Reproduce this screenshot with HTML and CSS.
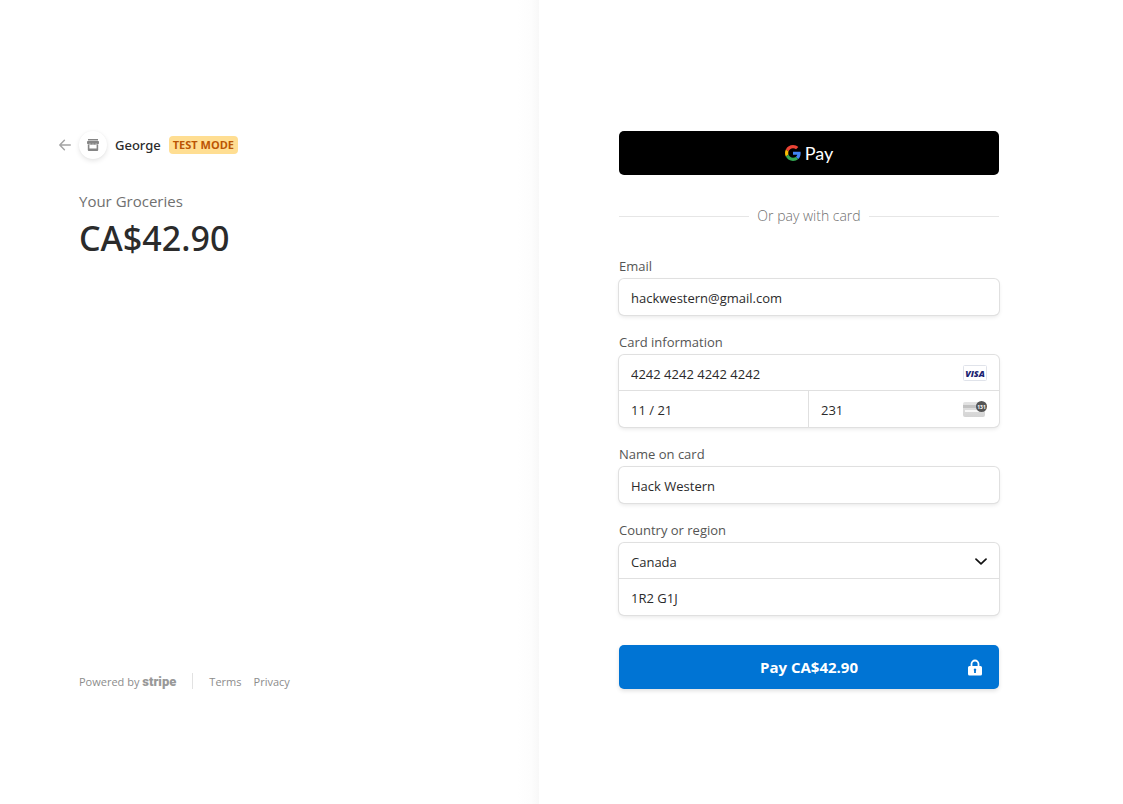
FILE: index.html
```html
<!DOCTYPE html>
<html lang="en">
<head>
<meta charset="utf-8">
<meta name="viewport" content="width=device-width, initial-scale=1">
<title>Checkout</title>
<link rel="stylesheet" href="styles.css">
</head>
<body>
<div class="page">
  <section class="side side-summary">
    <div class="summary">
      <header class="merchant">
        <a class="back" href="#" aria-label="Back">
          <svg width="12" height="12" viewBox="0 0 12 12" fill="none" stroke="#a3a3a3" stroke-width="1.4" stroke-linecap="round" stroke-linejoin="round"><path d="M11.3 6H.9M5.4 1.2.8 6l4.600 4.800"/></svg>
        </a>
        <span class="avatar">
          <svg width="12" height="12" viewBox="0 0 12 12" fill="#858585"><path d="M1 0h10v1.500H1zM.3 2h11.400L12 3.600a1.500 1.500 0 0 1-3 .5 1.500 1.500 0 0 1-3 0 1.500 1.500 0 0 1-3 0A1.500 1.500 0 0 1 0 3.600z"/><path fill-rule="evenodd" d="M.8 5.500h10.400V11a1 1 0 0 1-1 1H1.800a1 1 0 0 1-1-1zM2.400 6v3.500h7.200V6z"/></svg>
        </span>
        <span class="merchant-name">George</span>
        <span class="tag">TEST MODE</span>
      </header>
      <h1 class="product">Your Groceries</h1>
      <p class="amount">CA$42.90</p>
      <footer class="footer">
        <a class="powered" href="#">Powered by <span class="wordmark">stripe</span></a>
        <nav class="links"><a href="#">Terms</a><a href="#">Privacy</a></nav>
      </footer>
    </div>
  </section>
  <main class="side side-payment">
    <form class="payment">
      <button class="gpay" type="button" aria-label="Google Pay">
        <svg width="16" height="16" viewBox="0 0 48 48"><path fill="#ea4335" d="M24 9.500c3.540 0 6.710 1.220 9.210 3.600l6.850-6.850C35.900 2.380 30.470 0 24 0 14.620 0 6.510 5.380 2.560 13.220l7.980 6.190C12.430 13.720 17.740 9.500 24 9.500z"/><path fill="#4285f4" d="M46.980 24.550c0-1.570-.15-3.090-.38-4.550H24v9.020h12.940c-.58 2.960-2.260 5.480-4.780 7.180l7.730 6c4.510-4.180 7.090-10.360 7.090-17.650z"/><path fill="#fbbc05" d="M10.530 28.590c-.48-1.450-.76-2.990-.76-4.590s.27-3.140.76-4.590l-7.980-6.190C.92 16.460 0 20.120 0 24s.92 7.540 2.560 10.780l7.970-6.190z"/><path fill="#34a853" d="M24 48c6.480 0 11.930-2.130 15.890-5.810l-7.730-6c-2.150 1.450-4.920 2.300-8.160 2.300-6.260 0-11.570-4.220-13.470-9.910l-7.980 6.190C6.510 42.620 14.620 48 24 48z"/></svg>
        <span>Pay</span>
      </button>
      <p class="divider">Or pay with card</p>
      <div class="fields">
        <div class="group">
          <label for="email">Email</label>
          <div class="box"><div class="row"><input id="email" type="email" value="hackwestern@gmail.com"></div></div>
        </div>
        <div class="group">
          <label for="card">Card information</label>
          <div class="box">
            <div class="row row-top">
              <input id="card" type="text" inputmode="numeric" value="4242 4242 4242 4242">
              <svg class="row-icon" width="24" height="16" viewBox="0 0 24 16"><rect x=".5" y=".5" width="23" height="15" rx="1" fill="#fff" stroke="#e0e3ea"/><text x="12" y="11.500" text-anchor="middle" class="visa">VISA</text></svg>
            </div>
            <div class="split">
              <div class="row"><input type="text" aria-label="Expiry date" value="11 / 21"></div>
              <div class="row">
                <input type="text" aria-label="Security code" value="231">
                <svg class="row-icon" width="24" height="16" viewBox="0 0 24 16"><defs><linearGradient id="plate" x2="0" y2="1"><stop stop-color="#e4e4e4"/><stop offset="1" stop-color="#d4d4d4"/></linearGradient></defs><rect y="1" width="22" height="15" rx="2" fill="url(#plate)"/><path fill="#c2c2c2" d="M0 4h22v3H0z"/><path fill="#f8f8f8" d="M2 9h18v2H2z"/><circle cx="18.500" cy="5.500" r="5.500" fill="#555"/><text x="18.500" y="7.500" text-anchor="middle" class="cvc">131</text></svg>
              </div>
            </div>
          </div>
        </div>
        <div class="group">
          <label for="name">Name on card</label>
          <div class="box"><div class="row"><input id="name" type="text" value="Hack Western"></div></div>
        </div>
        <div class="group">
          <label for="country">Country or region</label>
          <div class="box">
            <div class="row row-top">
              <select id="country"><option>Canada</option></select>
              <svg class="row-icon" width="12" height="12" viewBox="0 0 12 12" fill="none" stroke="#111" stroke-width="1.700" stroke-linecap="round" stroke-linejoin="round"><path d="M1 4.200 6 8.900l5-4.700"/></svg>
            </div>
            <div class="row"><input type="text" aria-label="Postal code" value="1R2 G1J"></div>
          </div>
        </div>
      </div>
      <button class="submit" type="submit">
        <span>Pay CA$42.90</span>
        <svg width="14" height="17" viewBox="0 0 14 17"><path d="M3.500 8V5a3.500 3.500 0 0 1 7 0v3" fill="none" stroke="#fff" stroke-width="1.800"/><path fill="#fff" fill-rule="evenodd" d="M1.500 7h11A1.500 1.500 0 0 1 14 8.500v6.500a1.500 1.500 0 0 1-1.500 1.500h-11A1.500 1.500 0 0 1 0 15V8.500A1.500 1.500 0 0 1 1.500 7zM7 9.500a1.300 1.300 0 0 0-.9 2.200v2.300h1.800v-2.300A1.300 1.300 0 0 0 7 9.500z"/></svg>
      </button>
    </form>
  </main>
</div>
</body>
</html>
```
FILE: styles.css
```css
* {
  box-sizing: border-box;
}

body {
  margin: 0;
  background: #fff;
  color: #2b2b2b;
  font-family: "Open Sans", "Noto Sans", sans-serif;
  font-size: 13px;
}

h1, p {
  margin: 0;
  font-weight: 400;
}

a {
  color: inherit;
  text-decoration: none;
}

button, input, select {
  font: inherit;
  color: inherit;
}

.page {
  display: grid;
  grid-template-columns: 1fr 1fr;
  min-height: 100vh;
  padding-right: 45px;
}

.side {
  display: flex;
  align-items: flex-start;
  padding: 131px 80px 115px;
}

.side-summary {
  align-items: stretch;
  justify-content: flex-end;
  padding-left: 24px;
  background: linear-gradient(to left, #f8f8f8, #fdfdfd 8px, #fff 22px);
}

.side-payment {
  padding-right: 24px;
}

.summary, .payment {
  display: flex;
  flex-direction: column;
  width: 100%;
  max-width: 380px;
}

.merchant {
  display: flex;
  align-items: center;
  gap: 8px;
  height: 28px;
  margin-left: -20px;
}

.back, .avatar {
  display: flex;
  align-items: center;
  justify-content: center;
}

.avatar {
  width: 28px;
  height: 28px;
  border-radius: 50%;
  background: #fff;
  box-shadow: 0 2px 5px rgba(0, 0, 0, .1), 0 0 2px rgba(0, 0, 0, .04);
}

.merchant-name {
  font-family: "Noto Sans", sans-serif;
  font-weight: 500;
  font-size: 13px;
}

.tag {
  padding: 0 4px;
  border-radius: 4px;
  background: #ffde92;
  color: #bb5504;
  font-size: 11px;
  font-weight: 700;
  line-height: 18px;
}

.product {
  margin-top: 31px;
  color: #707070;
  font-size: 15px;
  line-height: 22px;
}

.amount {
  margin-top: 2px;
  font-family: "Noto Sans", sans-serif;
  font-size: 34px;
  font-weight: 500;
  line-height: 48px;
}

.footer {
  display: flex;
  height: 16px;
  margin-top: auto;
  color: #8c8c8c;
  font-size: 11px;
  line-height: 18px;
}

.powered {
  padding-right: 16px;
  border-right: 1px solid #e2e2e2;
}

.wordmark {
  color: #999;
  font-family: Roboto, sans-serif;
  font-size: 13px;
  font-weight: 900;
}

.links {
  display: flex;
  gap: 12px;
  padding-left: 16px;
}

.gpay, .submit {
  display: flex;
  align-items: center;
  justify-content: center;
  height: 44px;
  border: 0;
  border-radius: 5px;
  color: #fff;
}

.gpay {
  gap: 4px;
  background: #000;
  font-family: Lato, sans-serif;
  font-size: 18px;
}

.divider {
  display: flex;
  align-items: center;
  gap: 8px;
  margin: 30px 0 31px;
  color: #707070;
  font-size: 14px;
  font-weight: 300;
  line-height: 22px;
}

.divider::before, .divider::after {
  content: "";
  flex: 1;
  height: 1px;
  background: #e6e6e6;
}

.fields {
  display: flex;
  flex-direction: column;
  gap: 19px;
}

.group {
  display: flex;
  flex-direction: column;
  gap: 5px;
}

label {
  color: #555;
  line-height: 16px;
}

.box {
  border-radius: 5px;
  box-shadow: 0 0 0 1px #e0e0e0, 0 2px 4px rgba(0, 0, 0, .1);
}

.row {
  display: flex;
  align-items: center;
  height: 36px;
  padding: 0 12px;
}

.row-top {
  border-bottom: 1px solid #e0e0e0;
}

.split {
  display: grid;
  grid-template-columns: 1fr 1fr;
}

.split .row:first-child {
  border-right: 1px solid #e0e0e0;
}

.row input, .row select {
  flex: 1;
  width: 100%;
  min-width: 0;
  padding: 2px 0 0;
  border: 0;
  outline: 0;
  appearance: none;
  background: transparent;
  line-height: 20px;
}

.row-icon {
  flex: none;
}

.visa {
  fill: #1a1f71;
  font-size: 9px;
  font-style: italic;
  font-weight: 800;
}

.cvc {
  fill: #fff;
  font-size: 5px;
  font-weight: 700;
}

.submit {
  position: relative;
  margin-top: 30px;
  background: #0074d4;
  box-shadow: 0 2px 4px rgba(0, 0, 0, .12);
  font-size: 15px;
  font-weight: 700;
}

.submit svg {
  position: absolute;
  right: 17px;
}
```
